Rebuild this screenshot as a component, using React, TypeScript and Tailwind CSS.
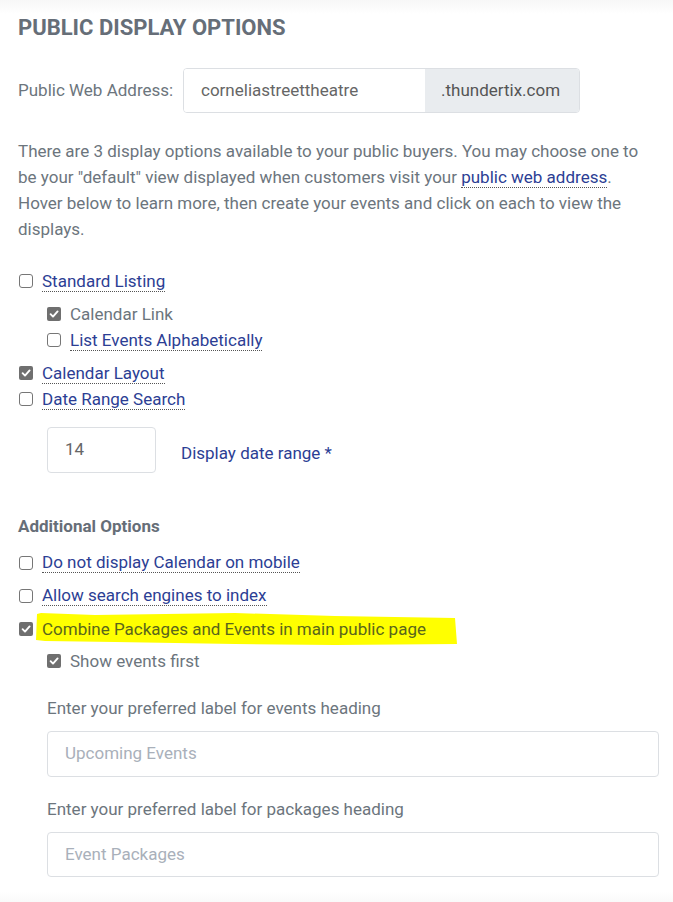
import React from "react";

const Box = ({ checked }: { checked?: boolean }) =>
  checked ? (
    <span className="inline-flex h-[14px] w-[14px] shrink-0 items-center justify-center rounded-[2px] bg-[#6f6f6f]">
      <svg width="10" height="10" viewBox="0 0 10 10">
        <path d="M1.6 5.2 L4 7.6 L8.6 2.4" fill="none" stroke="#fff" strokeWidth="1.9" strokeLinecap="round" strokeLinejoin="round" />
      </svg>
    </span>
  ) : (
    <span className="inline-block h-[14px] w-[14px] shrink-0 rounded-[3px] border border-[#767676] bg-white" />
  );

const Row = ({
  checked,
  label,
  link = true,
  indent = false,
  h = 26,
}: {
  checked?: boolean;
  label: string;
  link?: boolean;
  indent?: boolean;
  h?: number;
}) => (
  <div className={`flex items-center gap-[9px] ${indent ? "pl-[29px]" : "pl-px"}`} style={{ height: h }}>
    <Box checked={checked} />
    {link ? (
      <span className="border-b border-dotted border-[#555] leading-[20px] text-[#2c3e94]">{label}</span>
    ) : (
      <span className="leading-[20px] text-[#6c757d]">{label}</span>
    )}
  </div>
);

export default function App() {
  return (
    <div
      className="relative min-h-[902px] bg-white text-[17px] text-[#6c757d]"
      style={{ fontFamily: "Roboto, 'Liberation Sans', sans-serif" }}
    >
      <div className="pointer-events-none absolute inset-x-0 top-0 h-[14px] bg-gradient-to-b from-[#f7f7f7] to-white" />
      <div className="pointer-events-none absolute inset-x-0 bottom-0 h-[10px] bg-gradient-to-t from-[#fafafa] to-white" />
      <div className="relative pl-[18px] pr-[14px] pt-[13px]">
        <h1 className="text-[22px] font-bold uppercase leading-[30px] text-[#666e78]">Public Display Options</h1>

        <div className="mt-[25px] flex items-center">
          <span className="w-[165px]">Public Web Address:</span>
          <div className="flex h-[45px] w-[397px] overflow-hidden rounded-[4px] border border-[#dcdfe3]">
            <div className="flex w-[241px] items-center bg-white pl-[17px] text-[#666]">corneliastreettheatre</div>
            <div className="flex flex-1 items-center bg-[#e9ecef] pl-[16px] text-[#555]">.thundertix.com</div>
          </div>
        </div>

        <p className="mt-[25px] leading-[26px]">
          There are 3 display options available to your public buyers. You may choose one to be your "default" view
          displayed when customers visit your{" "}
          <span className="border-b border-dotted border-[#555] text-[#2c3e94]">public web address</span>. Hover below to
          learn more, then create your events and click on each to view the displays.
        </p>

        <div className="mt-[26px]">
          <Row label="Standard Listing" />
          <div className="h-[7px]" />
          <Row label="Calendar Link" checked link={false} indent />
          <Row label="List Events Alphabetically" indent />
          <div className="h-[7px]" />
          <Row label="Calendar Layout" checked />
          <Row label="Date Range Search" />
        </div>

        <div className="mt-[15px] flex items-center pl-[29px]">
          <div className="flex h-[46px] w-[109px] items-center rounded-[4px] border border-[#dcdfe3] pl-[17px] text-[#666]">
            14
          </div>
          <span className="ml-[25px] mt-[7px] text-[#2c3e94]">Display date range *</span>
        </div>

        <h2 className="mt-[42px] text-[17px] font-bold leading-[22px] text-[#666e78]">Additional Options</h2>

        <div className="mt-[9px]">
          <Row label="Do not display Calendar on mobile" h={33} />
          <Row label="Allow search engines to index" h={33} />
          <div className="relative flex h-[33px] items-center gap-[9px] pl-px">
            <Box checked />
            <span className="relative leading-[20px]">
              <svg className="absolute left-[-7px] top-[-8px]" width="424" height="36" viewBox="0 0 424 36">
                <path
                  d="M2 3 L6 2 L60 4 L200 2 L300 5 L420 7 L422 33 L300 34 L200 33 L80 31 L10 30 L1 29 Z"
                  fill="#ffff00"
                />
              </svg>
              <span className="relative text-[#59651c]">Combine Packages and Events in main public page</span>
            </span>
          </div>
          <Row label="Show events first" checked link={false} indent h={32} />
        </div>

        <div className="mt-[20px] pl-[29px]">
          <div className="leading-[22px]">Enter your preferred label for events heading</div>
          <div className="mt-[12px] flex h-[46px] items-center rounded-[4px] border border-[#dcdfe3] pl-[17px] text-[#a9b0ba]">
            Upcoming Events
          </div>
          <div className="mt-[21px] leading-[22px]">Enter your preferred label for packages heading</div>
          <div className="mt-[12px] flex h-[45px] items-center rounded-[4px] border border-[#dcdfe3] pl-[17px] text-[#a9b0ba]">
            Event Packages
          </div>
        </div>
      </div>
    </div>
  );
}
